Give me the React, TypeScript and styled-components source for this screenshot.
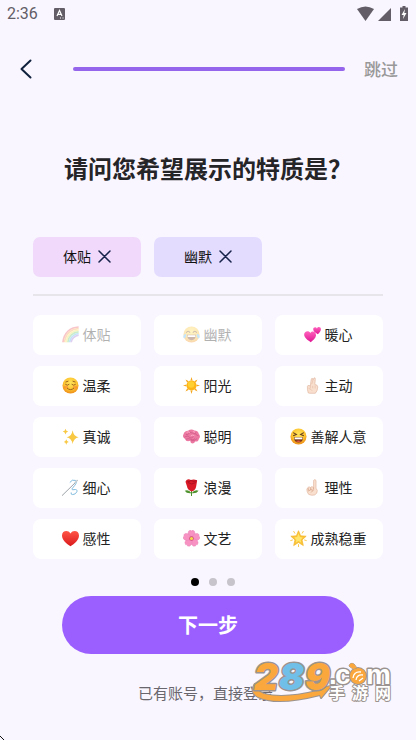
import React, { useState } from "react";
import styled, { createGlobalStyle } from "styled-components";

const GlobalStyle = createGlobalStyle`
  * { box-sizing: border-box; }
  html, body { margin: 0; background: #f9f6ff; }
  body { font-family: "Noto Sans CJK SC", "Noto Sans", sans-serif; color: #222; }
  button { font: inherit; border: 0; padding: 0; cursor: pointer; color: inherit; background: none; }
  svg { display: block; flex: none; }
`;

const Page = styled.div`
  position: relative;
  min-height: 100vh;
  display: flex;
  flex-direction: column;
  overflow: hidden;
  background: #f9f6ff;
`;

const StatusBar = styled.div`
  display: flex;
  align-items: center;
  height: 28px;
  padding: 0 8px 0 7px;
  color: #625d66;
`;

const Clock = styled.span`
  font: 400 16px/28px Roboto, sans-serif;
  margin-right: 16px;
`;

const StatusIcons = styled.div`
  display: flex;
  align-items: center;
  gap: 8px;
  margin-left: auto;
`;

const Header = styled.header`
  display: flex;
  align-items: center;
  height: 40px;
  margin-top: 21px;
  padding: 0 18px 0 16px;
`;

const BackButton = styled.button`
  width: 20px;
  height: 40px;
  display: flex;
  align-items: center;
  justify-content: center;
`;

const Progress = styled.div`
  flex: 1;
  height: 4px;
  margin: 0 19px 0 37px;
  border-radius: 2px;
  background: #9565eb;
`;

const SkipButton = styled.button`
  font-size: 17px;
  line-height: 24px;
  font-weight: 500;
  color: #999;
`;

const Title = styled.h1`
  margin: 61px 0 0;
  font-size: 24px;
  line-height: 36px;
  font-weight: 700;
  text-align: center;
  color: #252427;
`;

const Main = styled.main`
  padding: 0 33px;
`;

const Grid = styled.div`
  display: grid;
  grid-template-columns: repeat(3, 1fr);
  gap: 11px 13px;
`;

const Selected = styled(Grid)`
  margin-top: 51px;
  padding-bottom: 17px;
  border-bottom: 2px solid #e7e4ea;
  margin-bottom: 19px;
`;

const Chip = styled.button<{ $tone: string }>`
  display: flex;
  align-items: center;
  justify-content: center;
  gap: 7px;
  height: 40px;
  padding-bottom: 2px;
  border-radius: 7px;
  background: ${(p) => p.$tone};
  color: #111;
  font-size: 14px;
  line-height: 20px;
`;

const Trait = styled.button`
  display: flex;
  align-items: center;
  justify-content: center;
  gap: 4px;
  height: 40px;
  padding: 0 2px 2px 0;
  border-radius: 8px;
  background: #fff;
  font-size: 14px;
  line-height: 20px;
  color: #222;
  white-space: nowrap;
  &:disabled > * { opacity: 0.35; }
`;

const Dots = styled.div`
  display: flex;
  justify-content: center;
  gap: 10px;
  margin: 19px 0 10px;
  padding-left: 10px;
`;

const Dot = styled.button<{ $active: boolean }>`
  width: 8px;
  height: 8px;
  margin: 0;
  border-radius: 50%;
  background: ${(p) => (p.$active ? "#000" : "#c7c4cc")};
`;

const NextButton = styled.button`
  height: 58px;
  margin: 0 62px;
  border-radius: 29px;
  background: #9b5fff;
  color: #fff;
  font-size: 20px;
  line-height: 30px;
  font-weight: 700;
`;

const Footer = styled.footer`
  position: relative;
  margin-top: 27px;
  padding: 0 5px 32px 0;
  display: flex;
  justify-content: center;
`;

const LoginLink = styled.a`
  font-size: 15px;
  line-height: 24px;
  color: #69666d;
  text-decoration: none;
`;

const Watermark = styled.svg`
  position: absolute;
  right: 22px;
  top: -30px;
  overflow: visible;
  pointer-events: none;
`;

const Pointer = styled.svg`
  position: absolute;
  left: 0;
  bottom: 0;
`;

const Face = ({ id }: { id: string }) => (
  <>
    <defs>
      <radialGradient id={id} cx="50%" cy="35%" r="65%">
        <stop offset="0" stopColor="#ffe45c" />
        <stop offset="0.6" stopColor="#fdc531" />
        <stop offset="1" stopColor="#ee8c17" />
      </radialGradient>
    </defs>
    <circle cx="12" cy="12" r="11.3" fill={`url(#${id})`} />
  </>
);

const art: Record<string, React.ReactNode> = {
  rainbow: (
    <g fill="none" strokeWidth="2.4">
      <path d="M1.4 23C2.5 10.5 10.5 2 23.5 1.4" stroke="#ef5b66" />
      <path d="M3.7 23C4.7 12 12 4.3 23.5 3.7" stroke="#f7a14b" />
      <path d="M6 23C7 13.5 13.5 6.6 23.5 6" stroke="#f5df50" />
      <path d="M8.3 23C9 15 15 9 23.5 8.3" stroke="#6fcc6b" />
      <path d="M10.6 23C11 17 16.5 11.3 23.5 10.6" stroke="#55b3ed" />
      <path d="M12.8 23C13.2 18.5 18 13.4 23.5 12.8" stroke="#a078d8" />
    </g>
  ),
  joy: (
    <>
      <Face id="joyFace" />
      <path d="M4.5 9.5Q7.5 5.5 10 9.5M14 9.5Q16.5 5.5 19.5 9.5" stroke="#70431a" strokeWidth="1.5" fill="none" />
      <path d="M5.5 12.5H18.5Q18 20 12 20T5.5 12.5Z" fill="#713515" />
      <path d="M6.5 13H17.5V15.5H6.5Z" fill="#fff" />
      <path d="M4.5 11Q0 12 .4 16C1.5 19 5 17 4.5 11ZM19.5 11Q24 12 23.6 16C22.5 19 19 17 19.5 11Z" fill="#5bb6f0" />
    </>
  ),
  hearts: (
    <>
      <defs>
        <linearGradient id="pinkHeart" x2="0" y2="1">
          <stop stopColor="#ff63bd" />
          <stop offset="1" stopColor="#e01593" />
        </linearGradient>
      </defs>
      <path d="M9.5 23C5 20 .3 16.5.2 12.5C.1 7 7 6 9 10C11.5 6.1 17.3 8 17 13.5C16.5 17.5 12.5 20.5 9.5 23Z" fill="url(#pinkHeart)" />
      <path d="M19.5 11.5C16 9.7 13 7.5 13 4.7C13 1.6 17 1 18.3 3.4C19.5.4 24 1 23.9 4.7C23.8 8 21.5 9.8 19.5 11.5Z" fill="url(#pinkHeart)" />
    </>
  ),
  relaxed: (
    <>
      <Face id="relaxedFace" />
      <ellipse cx="5.5" cy="14.5" rx="3" ry="2" fill="#f67834" opacity=".5" />
      <ellipse cx="18.5" cy="14.5" rx="3" ry="2" fill="#f67834" opacity=".5" />
      <path d="M5 10.5Q7.5 13 10 10.5M14 10.5Q16.5 13 19 10.5M7.5 16Q12 20 16.5 16M5.5 7L8.5 6M15.5 6L18.5 7" stroke="#8b5119" strokeWidth="1.2" strokeLinecap="round" fill="none" />
    </>
  ),
  sun: (
    <>
      <path d="M12 0L13.5 5H10.5ZM12 24L10.5 19H13.5ZM0 12L5 10.5V13.5ZM24 12L19 13.5V10.5ZM3.5 3.5L8.2 6L6 8.2ZM20.5 3.5L18 8.2L15.8 6ZM3.5 20.5L6 15.8L8.2 18ZM20.5 20.5L15.8 18L18 15.8Z" fill="#f3a61e" />
      <circle cx="12" cy="12" r="7" fill="#fdb515" />
      <circle cx="11.5" cy="10.5" r="4.5" fill="#ffd02f" />
    </>
  ),
  fingers: (
    <>
      <path d="M6 22.5Q4.500 18 4.800 13.500Q5 11.500 7 12L9 12.500L10 4Q10.500 1.500 12 2L12.800 4L14 1.500Q16 0 16 3L15.300 10.500Q19.500 11 19.500 14Q19.300 19.500 16 23H8Z" fill="#f9dfce" stroke="#dcae96" strokeWidth=".8" />
      <path d="M12.800 4L11 10M9 12.500V16M12.300 12.500V16M15.700 12V16M6.500 16Q10 17 11.500 19.500" stroke="#dfb39c" strokeWidth=".7" fill="none" />
    </>
  ),
  sparkles: (
    <g fill="#f8c843">
      <path d="M15 3Q16.3 12 23.5 13Q16.3 14.2 15 23Q13.7 14.2 6.5 13Q13.7 12 15 3Z" />
      <path d="M5 1Q5.5 4.6 8.800 5Q5.500 5.500 5 9Q4.400 5.500 1 5Q4.400 4.600 5 1ZM6 16Q6.500 19.300 9.600 19.800Q6.500 20.300 6 23.500Q5.500 20.300 2.500 19.800Q5.500 19.300 6 16Z" />
    </g>
  ),
  brain: (
    <>
      <path d="M13 22Q10 21 10.5 18Q4 20 3 15.5Q-1.5 13 .6 9Q2 4 7 4Q12 .8 16 3.500Q21 3.500 22.300 8Q25.500 12 22.500 15Q21.500 20 17 19Q16.500 22 13 22Z" fill="#ec79a2" />
      <path d="M4 9Q7 11 9 7M9 4Q9 7 13 7T17 9M2 13Q7 10 9 13T15 12M4 16Q8 14 11 16T17 15M18 6Q17 10 22 11M11 18Q16 19 20 15" stroke="#c65480" strokeWidth=".9" fill="none" />
      <path d="M5 6Q8 5 10 6M14 5L17 6M11 11Q14 9 16 11" stroke="#ffafc7" strokeWidth="1.2" fill="none" />
    </>
  ),
  laugh: (
    <>
      <Face id="laughFace" />
      <path d="M4.5 6.5L9 9L4.5 11M19.5 6.5L15 9L19.5 11" stroke="#60391d" strokeWidth="1.5" fill="none" />
      <path d="M5.5 13H18.5Q18 20.5 12 20.5T5.5 13Z" fill="#713515" />
      <path d="M6.5 13.3H17.5V16H6.5Z" fill="#fff" />
      <path d="M8 18.5Q12 16.5 16 18.5Q12 21 8 18.5Z" fill="#e75445" />
    </>
  ),
  needle: (
    <>
      <path d="M11 5Q14 0 19 2Q22 4 18 9L14 14Q14 16 17 15Q22 14 21 18Q19 22 15 22Q12 22 13 19" stroke="#7eb9dc" strokeWidth="1.4" fill="none" />
      <path d="M0 23.5L22.5 1.5" stroke="#929aa0" strokeWidth="1.3" />
      <path d="M18 5.5L22 1.5" stroke="#c5ced3" strokeWidth="2" />
    </>
  ),
  rose: (
    <>
      <path d="M12 13V24" stroke="#4d922d" strokeWidth="1.5" />
      <path d="M12 20Q5 21 2.5 16.5Q8 14 12 20ZM12 20Q19 21 22 16.5Q17 14 12 20Z" fill="#4d922d" />
      <path d="M5 1.5Q8-.5 11 1.5Q15-.5 20 2L18.5 11Q17 17 12 17.5Q6.5 16 5.5 10L3.5 4Z" fill="#d91925" />
      <path d="M6 3Q9 6 11 1.5M11 2Q15 5 19.5 2M7 5Q12 9 18 5" stroke="#9c0d20" strokeWidth="1" fill="none" />
    </>
  ),
  pointUp: (
    <>
      <path d="M13.5 12V2Q15.3-.3 17 2V13Q20 16 18 20Q15.5 23.5 11 23Q5.5 23 4.5 18Q3 14 5.5 12Q7 10 9 12Q11 9.5 13.5 12Z" fill="#f9dfce" stroke="#dcae96" strokeWidth=".8" />
      <path d="M13.5 12V15M9.5 12V15M6 13V16M6 17Q10 13.5 13 16L10 19" stroke="#d09a7f" strokeWidth="1" fill="none" />
    </>
  ),
  heart: (
    <>
      <defs>
        <linearGradient id="redHeart" x2="0" y2="1">
          <stop stopColor="#ff5547" />
          <stop offset="1" stopColor="#d9191b" />
        </linearGradient>
      </defs>
      <path d="M12 23C6.5 19.5 0 14 0 7.7C0 .5 9-.5 12 5C15-.5 24 .5 24 7.7C24 14 17.5 19.5 12 23Z" fill="url(#redHeart)" />
    </>
  ),
  blossom: (
    <>
      <g fill="#f792c3" stroke="#e67bb1" strokeWidth=".5">
        {[0, 72, 144, 216, 288].map((a) => (
          <path key={a} transform={`rotate(${a} 12 12)`} d="M12 12Q5 7 8 1.5L10.5 0L12 1.5L13.5 0L16 1.5Q19 7 12 12Z" />
        ))}
      </g>
      <circle cx="12" cy="12" r="3.2" fill="#ce4b79" />
      <circle cx="12" cy="12" r="2.2" fill="#f7d94d" />
    </>
  ),
  star: (
    <>
      <path d="M12 1L15 8.2L22.8 8.8L17 14L18.8 22L12 17.7L5.2 22L7 14L1.2 8.8L9 8.2Z" fill="#fac435" stroke="#f3b42c" />
      <path d="M12 5L14 10L18 10.5L15 14L16 18L12 15.5L8 18L9 14L6 10.5L10 10Z" fill="#ffe56b" />
      <path d="M5 1.5L7 5M19 1.5L17 5M.5 15L4 14M23.5 15L20 14M12 20V24" stroke="#f8c541" strokeWidth="1.3" />
    </>
  ),
};

const traits: [string, string][] = [
  ["rainbow", "体贴"], ["joy", "幽默"], ["hearts", "暖心"],
  ["relaxed", "温柔"], ["sun", "阳光"], ["fingers", "主动"],
  ["sparkles", "真诚"], ["brain", "聪明"], ["laugh", "善解人意"],
  ["needle", "细心"], ["rose", "浪漫"], ["pointUp", "理性"],
  ["heart", "感性"], ["blossom", "文艺"], ["star", "成熟稳重"],
];

const tones = ["#f0d9fa", "#e4dcff"];

const SiteMark = () => (
  <Watermark width="144" height="54" viewBox="0 -10 144 54" aria-hidden="true">
    <g stroke="#9b938f" strokeLinejoin="round" paintOrder="stroke">
      <path d="M5 23Q-1 31 8 36Q27 45 70 34L71 37L81 25L65 28L67 30Q34 38 14 33Q6 30 5 23Z" fill="#faa83e" strokeWidth="2" />
      <g fontFamily="Inter, sans-serif" fontSize="37" fontWeight="900" fontStyle="italic" strokeWidth="3">
        <text x="4" y="29" fill="#faa83e">2</text>
        <text x="29" y="29" fill="#70bfe9">8</text>
        <text x="55" y="29" fill="#faa83e">9</text>
      </g>
      <g fill="#fff" fontFamily="Liberation Sans, sans-serif" fontSize="28" fontWeight="700" strokeWidth="3">
        <text x="79" y="23">.</text>
        <text x="85" y="23">c</text>
        <text x="116" y="23">m</text>
      </g>
      <circle cx="108" cy="15" r="8" fill="#faa83e" strokeWidth="2" />
      <path d="M99 5Q100 1 104 3L107 7L103 8Z" fill="#faa83e" strokeWidth="1" />
      <path d="M103 17Q104 10 111 11M106 19Q107 13 113 14M109 20L113 17" fill="none" stroke="#fff" strokeWidth="1.3" />
      <g fill="#fff" fontFamily="Noto Sans CJK SC, sans-serif" fontSize="16" fontWeight="700" strokeWidth="2">
        <text x="79" y="38">手</text>
        <text x="102" y="38">游</text>
        <text x="125" y="38">网</text>
      </g>
    </g>
  </Watermark>
);

export default function App() {
  const [selected, setSelected] = useState<string[]>(["体贴", "幽默"]);
  const [page, setPage] = useState(0);

  return (
    <>
      <GlobalStyle />
      <Page>
        <StatusBar>
          <Clock>2:36</Clock>
          <svg width="11" height="12" viewBox="0 0 11 12">
            <rect width="11" height="12" rx="1" fill="#625d66" />
            <path d="M3 8L5.5 2.5L8 8M4 6.3H7M6 10H7M8.5 10H9.5" stroke="#fff" strokeWidth="1.2" fill="none" />
          </svg>
          <StatusIcons>
            <svg width="35" height="16" viewBox="0 0 35 16" fill="#625d66">
              <path d="M0 3Q8.5-2 17 3L8.5 15Z" />
              <path d="M34 2V15H21Z" />
            </svg>
            <svg width="8" height="16" viewBox="0 0 8 16">
              <path d="M2.5 0H5.5V1.5H8V15H0V1.5H2.5Z" fill="#625d66" />
              <path d="M5 3L1.5 9H3.7L3 13L6.5 7H4.3Z" fill="#fff" />
            </svg>
          </StatusIcons>
        </StatusBar>

        <Header>
          <BackButton aria-label="返回">
            <svg width="12" height="20" viewBox="0 0 12 20" fill="none" stroke="#10213d" strokeWidth="2" strokeLinecap="round" strokeLinejoin="round">
              <path d="M10.5 1.5L1.5 10L10.5 18.5" />
            </svg>
          </BackButton>
          <Progress role="progressbar" aria-label="进度" aria-valuenow={100} />
          <SkipButton>跳过</SkipButton>
        </Header>

        <Title>请问您希望展示的特质是？</Title>

        <Main>
          <Selected>
            {selected.map((name, i) => (
              <Chip key={name} $tone={tones[i % 2]} onClick={() => setSelected(selected.filter((s) => s !== name))}>
                {name}
                <svg width="13" height="13" viewBox="0 0 13 13" stroke="#17234a" strokeWidth="1.5" strokeLinecap="round">
                  <path d="M1 1L12 12M12 1L1 12" />
                </svg>
              </Chip>
            ))}
          </Selected>
          <Grid>
            {traits.map(([icon, name]) => (
              <Trait key={name} disabled={selected.includes(name)} onClick={() => setSelected([...selected, name])}>
                <svg width="17" height="17" viewBox="0 0 24 24" aria-hidden="true">{art[icon]}</svg>
                <span>{name}</span>
              </Trait>
            ))}
          </Grid>
        </Main>

        <Dots>
          {[0, 1, 2].map((n) => (
            <Dot key={n} $active={n === page} aria-label={`第${n + 1}页`} onClick={() => setPage(n)} />
          ))}
        </Dots>
        <NextButton>下一步</NextButton>
        <Footer>
          <LoginLink href="#login">已有账号，直接登录</LoginLink>
          <SiteMark />
        </Footer>
        <Pointer width="4" height="4" viewBox="0 0 4 4" aria-hidden="true">
          <path d="M0 0H1V1H2V2H3V3H4V4H3V3H2V2H1V1H0Z" fill="#111" />
        </Pointer>
      </Page>
    </>
  );
}
